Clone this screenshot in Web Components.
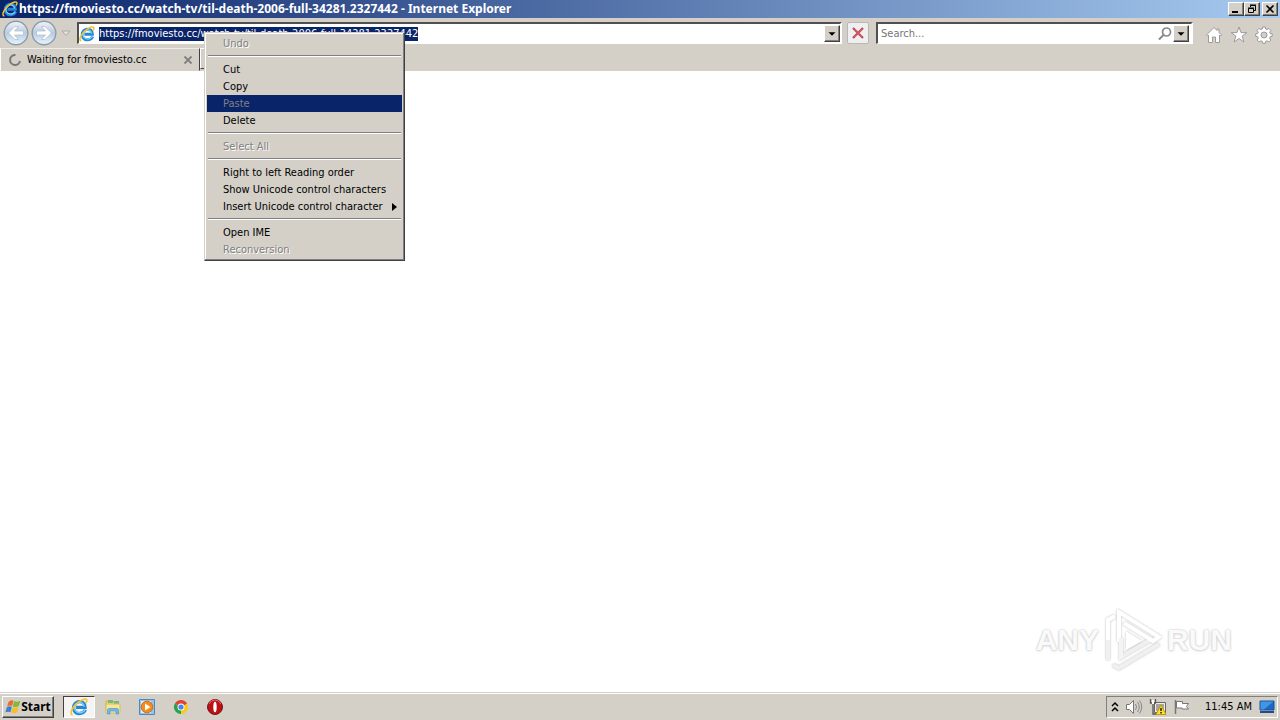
<!DOCTYPE html>
<html lang="en">
<head>
<meta charset="utf-8">
<title>Internet Explorer</title>
<style>
  html, body { height: 100%; margin: 0; }
  body { overflow: hidden; background: #fff; color: #000; font: 11px/14px "Tahoma", "DejaVu Sans Condensed", "DejaVu Sans", sans-serif;
    --face: #d4d0c8; --navy: #0a246a; --dark: #404040; --shade: #808080; }
</style>
</head>
<body>
<browser-desktop></browser-desktop>
<script>
const icons = {
  ie: `<svg viewBox="0 0 16 16"><path d="M13.600 10.400C12.200 14.300 6.300 15 4 11.600 2 8.500 3.500 4.500 7 3.400c3.900-1 6.500 1.600 6.400 4.900H5.400" fill="none" stroke="#2585d6" stroke-width="2.900"/><path d="M13.400 10.500C11.500 13.700 6.600 14 4.600 11 3 8.200 4.300 5 7.200 4c3-.8 5 .8 5.400 3.600" fill="none" stroke="#74d2fa" stroke-width="1.300"/><path d="M2.300 15.100C-1.200 14 2.500 7.200 8 3.300c3.700-2.600 7-3.200 7-1.200 0 .8-.4 1.700-.9 2.500" fill="none" stroke="#f5c32c" stroke-width="1.500"/></svg>`,
  home: `<svg viewBox="0 0 18 18"><path d="M1.500 9 9 1.500l3 3V3h2v3.500L16.500 9l-1 1L14.500 9v7.500h-4V11h-3v5.500h-4V9l-1 1z" fill="#fff" stroke="#9c9c9c"/></svg>`,
  star: `<svg viewBox="0 0 18 18"><path d="m9 1 2 5.600h5.800l-4.600 3.500 1.700 5.900L9 12.500 4.100 16l1.700-5.900L1.200 6.600H7z" fill="#fff" stroke="#9c9c9c"/></svg>`,
  gear: `<svg viewBox="0 0 18 18"><path d="M7.600 1h2.800l.4 2.100 1.300.5 1.800-1.200 2 2-1.200 1.800.5 1.300 2 .4v2.500l-2 .4-.6 1.400 1.200 1.800-2 2-1.800-1.200-1.300.5-.4 2.100H7.600l-.4-2.100-1.300-.5L4.100 16l-2-2 1.200-1.800-.6-1.400-2-.4V7.900l2-.4.5-1.300L2 4.400l2-2 1.800 1.200 1.400-.5z" fill="#fff" stroke="#999"/><circle cx="9" cy="9" r="3" fill="#d4d0c8" stroke="#999"/></svg>`,
  search: `<svg viewBox="0 0 16 16"><circle cx="9.500" cy="6" r="4" fill="none" stroke="#888" stroke-width="1.700"/><path d="m6.500 9-4.500 4.500" stroke="#888" stroke-width="2"/></svg>`,
  down: `<svg viewBox="0 0 16 16"><path d="M4 6h8l-4 4z" fill="#000"/></svg>`,
  stop: `<svg viewBox="0 0 16 16"><path d="m3 3 10 10M13 3 3 13" stroke="#a8505a" stroke-width="2.200"/><path d="m4 4 8 8M12 4l-8 8" stroke="#e05560" stroke-width="1.200"/></svg>`,
  back: `<svg viewBox="0 0 26 26"><defs><linearGradient id="g" x2="0" y2="1"><stop stop-color="#f4f6f9"/><stop offset=".5" stop-color="#b9cade"/><stop offset="1" stop-color="#e8f8ff"/></linearGradient></defs><circle cx="13" cy="13" r="11.800" fill="url(#g)" stroke="#8d9cad" stroke-width="1.400"/><path d="M5.500 13 12 6.500h3.500L11.500 11h9v4h-9l4 4.500H12z" fill="#fff" stroke="#a9bace" stroke-width=".7"/></svg>`,
  spin: `<svg viewBox="0 0 14 14"><path d="M7.500 2A5 5 0 1 0 12 8" fill="none" stroke="#777" stroke-width="2"/></svg>`,
  close: `<svg viewBox="0 0 10 10"><path d="m1.500 1.500 7 7m0-7-7 7" stroke="#808080" stroke-width="1.800"/></svg>`,
  min: `<svg viewBox="0 0 12 10"><path d="M2 7h6v2H2z"/></svg>`,
  restore: `<svg viewBox="0 0 12 10"><path d="M4.500 3V1.500h5v5H8M4 1h6M2.500 4.500h5v4h-5zM2 4h6" fill="none" stroke="#000"/></svg>`,
  quit: `<svg viewBox="0 0 12 10"><path d="m2.500 1.500 7 7m0-7-7 7" stroke="#000" stroke-width="1.600"/></svg>`,
  flag: `<svg viewBox="0 0 18 18"><path d="M4 3.500C6 1 8 1 9.500 2L8 8C6 7 4.500 7 2.300 8.500z" fill="#ee6a2a"/><path d="M10.300 2.300c2.200 1 4 1 7-.3L15.600 8c-2.700 1.300-4.500 1.300-6.800.3z" fill="#82b83b"/><path d="M2 9.300C4.200 7.800 6 8 7.700 8.900l-1.600 6C4.500 14 2.700 14 .5 15z" fill="#3e80d0"/><path d="M8.500 9.200c2.200 1 4 1 6.800-.2l-1.600 6c-2.700 1.300-4.500 1.200-6.700.2z" fill="#f8bd28"/></svg>`,
  folder: `<svg viewBox="0 0 18 18"><path d="M2 3h5l1 1h6v9H2z" fill="#f1d66f" stroke="#cfae43"/><path d="M4 2h5v3H4zM10 3h5v3h-5z" fill="#74b884"/><path d="M2 6h14v9H2z" fill="#f7e69b" stroke="#d9be63"/><path d="M3.500 16v-4q0-1.500 1.500-1.500h8q1.500 0 1.500 1.500v4h-2.500v-3H6v3z" fill="#70bce9" stroke="#4b9bd0" stroke-width=".7"/></svg>`,
  media: `<svg viewBox="0 0 18 18"><path d="M1.500 1.500h15v15h-15z" fill="#8ec5f2" stroke="#4b88c5"/><path d="M3 3h10v12H3z" fill="#d8efff"/><circle cx="9" cy="9" r="5.800" fill="#f58b18" stroke="#db6c0c"/><path d="m7 5.500 5.500 3.500L7 12.500z" fill="#fff"/></svg>`,
  chrome: `<svg viewBox="0 0 18 18"><path d="M9 9V2l6.100 3.500A7 7 0 0 1 9 16z" fill="#fbc91d"/><path d="M9 9v7A7 7 0 0 1 2.900 5.500z" fill="#2ca14b"/><path d="M2.900 5.500A7 7 0 0 1 15.100 5.500L9 9z" fill="#e34133"/><circle cx="9" cy="9" r="3.500" fill="#fff"/><circle cx="9" cy="9" r="2.600" fill="#4286ee"/></svg>`,
  opera: `<svg viewBox="0 0 18 18"><circle cx="9" cy="9" r="7.500" fill="#bb1116" stroke="#7e1014"/><path d="M3 6Q5 2 9 2t6 4" fill="none" stroke="#e46c6c"/><ellipse cx="9" cy="9" rx="1.700" ry="5.300" fill="#fff"/></svg>`,
  more: `<svg viewBox="0 0 8 12"><path d="m1 5 3-3 3 3M1 10l3-3 3 3" fill="none" stroke="#000" stroke-width="1.500"/></svg>`,
  sound: `<svg viewBox="0 0 18 18"><path d="M1.500 6.500h3l4-4v13l-4-4h-3z" fill="#fff" stroke="#777"/><path d="M10.500 6q2 3 0 6M12.500 4q3.500 5 0 10M14.500 2.500q4.500 6.500 0 13" fill="none" stroke="#888"/></svg>`,
  net: `<svg viewBox="0 0 18 18"><path d="M5.500 4.500h11v10h-11z" fill="#eee" stroke="#666"/><path d="M7 6h8v7H7z" fill="#a5a6a1"/><path d="M1.500 1v4h5V1M4 5v11h4" fill="none" stroke="#555" stroke-width="1.300"/><path d="M3 2h2v4H3z" fill="#fff"/><path d="m12 7 5 9.500H7z" fill="#ffe235" stroke="#c59c00"/><path d="M12 10v3m0 1v1.500" stroke="#000" stroke-width="1.300"/></svg>`,
  alert: `<svg viewBox="0 0 18 18"><path d="M2.500 2v14" stroke="#777" stroke-width="1.500"/><path d="M3.500 3.500h6v2h6l-2 3 2 2.500H9V10H3.500z" fill="#fff" stroke="#777"/></svg>`,
  desk: `<svg viewBox="0 0 16 14"><path d="M1 1h14v9H1z" fill="#1b68c6" stroke="#155099"/><path d="M1.500 1.500h13L5 9.500H1.500z" fill="#4295e3"/><path d="M1 11h14v2H1z" fill="#294a7d"/></svg>`
};

const define = (name, css, html) => customElements.define(name, class extends HTMLElement {
  connectedCallback() {
    if (this.shadowRoot) return;
    const root = this.attachShadow({ mode: 'open' });
    root.innerHTML = `<style>*{box-sizing:border-box}${css}</style>${typeof html === 'function' ? html(this) : html}`;
  }
});

define('ui-icon', `:host{display:block;flex:none;width:16px;height:16px}svg{display:block;width:100%;height:100%}`,
  el => icons[el.getAttribute('name')]);

define('title-bar', `
  :host{display:flex;align-items:center;height:18px;padding:0 2px;background:linear-gradient(90deg,#0a246a,#a6caf0);color:#fff}
  h1{flex:1;min-width:0;margin:0;padding-left:1px;font:bold 12px/18px "Tahoma","Noto Sans","DejaVu Sans",sans-serif;white-space:nowrap;overflow:hidden}
  button{width:16px;height:14px;padding:1px;border:1px solid;border-color:#fff #404040 #404040 #fff;background:var(--face);box-shadow:inset -1px -1px #808080}
  button:last-child{margin-left:2px}
  button ui-icon{width:12px;height:10px}`,
  `<ui-icon name="ie"></ui-icon><h1><slot></slot></h1>
   <button aria-label="Minimize"><ui-icon name="min"></ui-icon></button><button aria-label="Restore"><ui-icon name="restore"></ui-icon></button><button aria-label="Close"><ui-icon name="quit"></ui-icon></button>`);

define('nav-bar', `
  :host{display:flex;align-items:center;height:30px;padding:0 7px 0 2px;background:var(--face)}
  button{display:grid;place-items:center;flex:none;padding:0;border:0;background:none;color:inherit}
  .round{width:28px;height:28px}.round ui-icon{width:26px;height:26px}.flip{transform:scaleX(-1)}
  .history{width:19px;padding-right:4px}
  .field{display:flex;align-items:center;height:22px;border:2px solid;border-color:#505050 #fff #fff #505050;border-bottom-width:1px;background:#fff;min-width:0}
  .address{flex:761 1 0}.search{flex:313 1 0}
  .address>ui-icon{margin:0 4px 0 0}
  input{min-width:0;height:14px;padding:0;border:0;outline:0;font:inherit}
  .address input{field-sizing:content;background:var(--navy);color:#fff}
  .search input{flex:1;padding-left:3px;background:none}
  input::placeholder{color:#757575;opacity:1}
  .drop{width:16px;height:17px;margin-left:auto;border:1px solid;border-color:#fff #404040 #404040 #fff;background:var(--face);box-shadow:inset -1px -1px #808080}
  .search .drop{margin:0 2px 0 0}
  .drop ui-icon{width:14px;height:14px}
  .stop{width:22px;height:22px;margin:0 7px 0 5px;border:1px solid #b8b8b8;border-radius:2px;background:#f0eff0}
  .tools{display:flex;gap:7px;margin-left:12px;padding-top:4px}.tools ui-icon{width:18px;height:18px}`,
  `<button class="round" aria-label="Back"><ui-icon name="back"></ui-icon></button>
   <button class="round flip" aria-label="Forward"><ui-icon name="back"></ui-icon></button>
   <button class="history" aria-label="Recent pages"><svg width="10" height="7" viewBox="0 0 10 7"><path d="M1 1h8L5 5.500z" fill="#e5e2dc" stroke="#aaa"/></svg></button>
   <div class="field address"><ui-icon name="ie"></ui-icon><input aria-label="Address" value="https://fmoviesto.cc/watch-tv/til-death-2006-full-34281.2327442"><button class="drop" aria-label="Show addresses"><ui-icon name="down"></ui-icon></button></div>
   <button class="stop" aria-label="Stop"><ui-icon name="stop"></ui-icon></button>
   <div class="field search"><input aria-label="Search" placeholder="Search..."><ui-icon name="search"></ui-icon><button class="drop" aria-label="Search options"><ui-icon name="down"></ui-icon></button></div>
   <div class="tools"><button aria-label="Home"><ui-icon name="home"></ui-icon></button><button aria-label="Favorites"><ui-icon name="star"></ui-icon></button><button aria-label="Tools"><ui-icon name="gear"></ui-icon></button></div>`);

define('tab-strip', `
  :host{display:flex;height:23px;background:var(--face)}
  .tab{display:flex;align-items:center;width:200px;padding:0 6px 0 7px;border:1px solid;border-color:#eeece8 #404040 var(--face) #fff}
  span{flex:1;padding-left:5px}
  .tab>ui-icon{width:14px;height:14px}
  button{padding:0;border:0;background:none}
  button ui-icon{width:10px;height:10px}
  .new{width:28px;height:21px;border:1px solid;border-color:#fff #808080 #404040 #fff}`,
  `<div class="tab"><ui-icon name="spin"></ui-icon><span><slot></slot></span><button aria-label="Close tab"><ui-icon name="close"></ui-icon></button></div><button class="new" aria-label="New tab"></button>`);

define('menu-item', `
  :host{display:block}
  button{display:flex;align-items:center;justify-content:space-between;width:100%;height:17px;padding:0 5px 0 16px;border:0;background:none;color:#000;font:inherit;white-space:nowrap}
  :host([off]) button{color:#808080;text-shadow:1px 1px #fff}
  :host([active]) button{background:var(--navy);text-shadow:none}
  svg{width:5px;height:8px}`,
  el => `<button role="menuitem" ${el.hasAttribute('off') ? 'aria-disabled="true"' : ''}><slot></slot>${el.hasAttribute('more') ? '<svg viewBox="0 0 5 8"><path d="M0 0v8l5-4z"/></svg>' : ''}</button>`);

define('context-menu', `
  :host{position:absolute;left:204px;top:32px;display:block;box-sizing:border-box;width:201px;padding:2px;border:1px solid;border-color:var(--face) #404040 #404040 var(--face);background:var(--face);box-shadow:inset -1px -1px #808080,inset 1px 1px #fff}
  hr{height:2px;margin:3px 1px 4px;border:0;border-top:1px solid #808080;border-bottom:1px solid #fff}`,
  `<div role="menu"><menu-item off>Undo</menu-item><hr><menu-item>Cut</menu-item><menu-item>Copy</menu-item><menu-item off active>Paste</menu-item><menu-item>Delete</menu-item><hr><menu-item off>Select All</menu-item><hr><menu-item>Right to left Reading order</menu-item><menu-item>Show Unicode control characters</menu-item><menu-item more>Insert Unicode control character</menu-item><hr><menu-item>Open IME</menu-item><menu-item off>Reconversion</menu-item></div>`);

define('any-run', `
  :host{position:absolute;right:48px;bottom:48px;display:flex;align-items:center;gap:5px;color:#fafafa;font:bold 30px/64px "Liberation Sans",sans-serif;text-shadow:0 0 2px #bbb,0 1px 3px #ddd}
  svg{width:58px;height:64px;filter:drop-shadow(0 0 1px #bbb)}`,
  `<span>ANY</span><svg viewBox="0 0 58 64"><path d="M4 52V12l6-3M9 57l6 3 40-24M17 49l31-18" fill="none" stroke="#f0f0f0" stroke-width="4"/><path d="M4 32V12l7-4M15 34V4l40 25-6 4-29-18" fill="none" stroke="#fff" stroke-width="4"/><path d="M15 30v23l4-3V30z" fill="#f4f4f4"/><path d="M22 23v19l16-9z" fill="#fff"/></svg><span>RUN</span>`);

define('task-bar', `
  :host{display:flex;align-items:center;box-sizing:border-box;height:28px;padding:2px;border-top:1px solid var(--face);box-shadow:inset 0 1px #fff;background:var(--face)}
  button{display:flex;align-items:center;justify-content:center;height:22px;padding:0;border:0;background:none;color:#000;font:inherit}
  button ui-icon{width:18px;height:18px}
  .start{width:52px;font:bold 12px/14px "Tahoma","Noto Sans","DejaVu Sans",sans-serif;border:1px solid;border-color:#fff #404040 #404040 #fff;box-shadow:inset -1px -1px #808080}
  .start ui-icon{width:16px;height:16px}
  nav{display:flex;flex:1;gap:2px;margin-left:9px}
  nav button{width:32px}
  nav .on{border:1px solid;border-color:#404040 #fff #fff #404040;background:#f5f4f2}
  .tray{display:flex;align-items:center;gap:6px;height:22px;padding:0 2px 0 4px;border:1px solid;border-color:#808080 #fff #fff #808080}
  .tray ui-icon{width:18px;height:18px}.tray .more{width:8px;height:12px}.tray .desk{width:16px;height:14px}
  time{margin:0 1px 0 8px}`,
  `<button class="start"><ui-icon name="flag"></ui-icon>Start</button>
   <nav><button class="on" aria-label="Internet Explorer"><ui-icon name="ie"></ui-icon></button><button aria-label="Explorer"><ui-icon name="folder"></ui-icon></button><button aria-label="Media Player"><ui-icon name="media"></ui-icon></button><button aria-label="Chrome"><ui-icon name="chrome"></ui-icon></button><button aria-label="Opera"><ui-icon name="opera"></ui-icon></button></nav>
   <div class="tray"><ui-icon class="more" name="more"></ui-icon><ui-icon name="sound"></ui-icon><ui-icon name="net"></ui-icon><ui-icon name="alert"></ui-icon><time>11:45 AM</time><ui-icon class="desk" name="desk"></ui-icon></div>`);

define('browser-desktop', `
  :host{position:relative;display:flex;flex-direction:column;height:100vh}
  main{flex:1;background:#fff}`,
  `<title-bar>https://fmoviesto.cc/watch-tv/til-death-2006-full-34281.2327442 - Internet Explorer</title-bar><nav-bar></nav-bar><tab-strip>Waiting for fmoviesto.cc</tab-strip><main></main><task-bar></task-bar><any-run></any-run><context-menu></context-menu>`);
</script>
</body>
</html>
